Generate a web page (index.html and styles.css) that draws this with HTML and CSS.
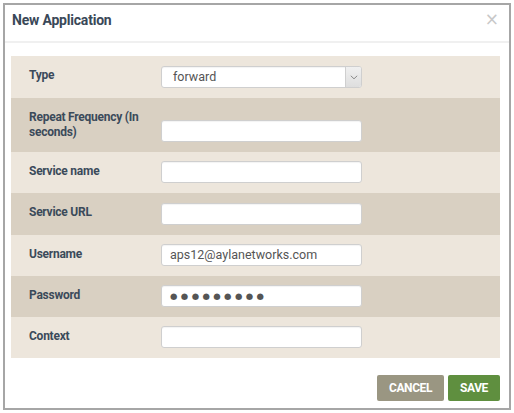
FILE: index.html
```html
<!DOCTYPE html>
<html>
<head>
<meta charset="utf-8">
<link rel="stylesheet" href="styles.css">
</head>
<body>
<div class="modal">
  <div class="modal-header">
    <h1 class="title">New Application</h1>
    <span class="close">×</span>
  </div>
  <div class="modal-body">
    <div class="form">
      <div class="row light h42">
        <label class="label">Type</label>
        <div class="select">
          <span class="select-value">forward</span>
          <span class="select-btn"><svg width="8" height="5" viewBox="0 0 8 5"><path d="M0.8 0.8 L4 3.8 L7.2 0.8" fill="none" stroke="#8a8a8a" stroke-width="1"/></svg></span>
        </div>
      </div>
      <div class="row dark tall">
        <label class="label">Repeat Frequency (In seconds)</label>
        <div class="input"></div>
      </div>
      <div class="row light">
        <label class="label">Service name</label>
        <div class="input"></div>
      </div>
      <div class="row dark h42">
        <label class="label">Service URL</label>
        <div class="input"></div>
      </div>
      <div class="row light">
        <label class="label">Username</label>
        <div class="input">aps12@aylanetworks.com</div>
      </div>
      <div class="row dark">
        <label class="label">Password</label>
        <div class="input password">●●●●●●●●●</div>
      </div>
      <div class="row light">
        <label class="label">Context</label>
        <div class="input"></div>
      </div>
    </div>
    <div class="footer">
      <button class="btn cancel">CANCEL</button>
      <button class="btn save">SAVE</button>
    </div>
  </div>
</div>
</body>
</html>
```

FILE: styles.css
```css
* { box-sizing: border-box; }
html, body { margin: 0; padding: 0; background: #fff; }
body { font-family: Roboto, "Liberation Sans", sans-serif; }

.modal {
  margin: 3px;
  width: 508px;
  height: 407px;
  border: 2px solid #a6a6a6;
  background: #fff;
  display: flex;
  flex-direction: column;
}

.modal-header {
  height: 38px;
  border-bottom: 2px solid #f0f0f0;
  display: flex;
  align-items: flex-start;
  justify-content: space-between;
  padding: 0 10px 0 7px;
}
.title {
  margin: 0;
  padding-top: 7px;
  font-size: 14px;
  line-height: 17px;
  font-weight: bold;
  color: #3a4858;
  letter-spacing: -0.2px;
}
.close {
  font-size: 17px;
  line-height: 17px;
  padding-top: 6px;
  color: #c8c8c8;
  font-family: "DejaVu Sans", sans-serif;
}

.modal-body {
  padding: 13px 9px 0 6px;
  display: flex;
  flex-direction: column;
}

.form { display: flex; flex-direction: column; }
.row {
  display: flex;
  align-items: flex-end;
  padding: 9px 0 10px 18px;
  height: 41px;
}
.row.h42 { height: 42px; }
.row.tall { height: 54px; }
.light { background: #ede6dc; }
.dark { background: #d9d0c2; }

.label {
  align-self: flex-start;
  width: 132px;
  padding-top: 3px;
  font-size: 12px;
  line-height: 15px;
  font-weight: bold;
  color: #3b4a5a;
  letter-spacing: -0.25px;
  padding-right: 14px;
}

.input, .select {
  width: 201px;
  height: 22px;
  background: #fff;
  border: 1px solid #cfcfcf;
  border-radius: 3px;
  font-size: 12.5px;
  line-height: 20px;
  color: #555;
  padding: 0 8px;
  box-shadow: inset 0 1px 1px rgba(0,0,0,0.05);
}
.input.password {
  font-family: "DejaVu Sans", sans-serif;
  font-size: 8.5px;
  letter-spacing: 3.4px;
  color: #555;
}
.select {
  display: flex;
  padding: 0 0 0 11px;
  overflow: hidden;
}
.select-value { flex: 1; }
.select-btn {
  width: 16px;
  height: 100%;
  background: linear-gradient(#f0f0f0, #dedede);
  border-left: 1px solid #cfcfcf;
  display: flex;
  align-items: center;
  justify-content: center;
}

.footer {
  display: flex;
  justify-content: flex-end;
  gap: 4px;
  padding-top: 17px;
}
.btn {
  height: 26px;
  border: none;
  border-radius: 2px;
  color: #fff;
  font-family: Roboto, "Liberation Sans", sans-serif;
  font-weight: bold;
  font-size: 12px;
  letter-spacing: -0.4px;
  padding: 0;
}
.cancel { width: 67px; background: #9a9682; }
.save { width: 52px; background: #5f8f3f; }
```
